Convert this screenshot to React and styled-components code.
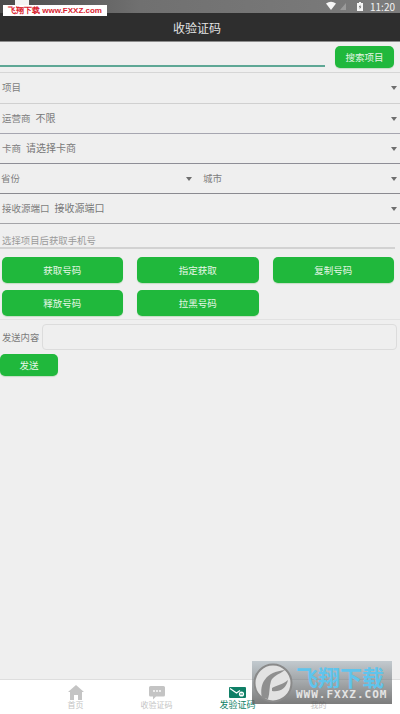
import React from 'react';
import styled, { createGlobalStyle } from 'styled-components';

const GlobalStyle = createGlobalStyle`
	html, body {
		margin: 0;
		padding: 0;
		height: 100%;
		background: #efefef;
		font-family: "Noto Sans CJK SC", "Noto Sans", sans-serif;
	}
	* {
		box-sizing: border-box;
	}
`;

const Page = styled.div`
	position: relative;
	width: 400px;
	height: 714px;
	overflow: hidden;
	display: flex;
	flex-direction: column;
	background: #efefef;
`;

const StatusBar = styled.div`
	height: 13px;
	display: flex;
	align-items: center;
	justify-content: flex-end;
	gap: 6px;
	padding-right: 5px;
	background: linear-gradient(90deg, #4a4a4a 0%, #707070 35%, #7c7c7c 100%);
	color: #f2f2f2;
	font-size: 10px;
	line-height: 13px;
`;

const TitleBar = styled.div`
	height: 29px;
	display: flex;
	align-items: center;
	justify-content: center;
	padding-right: 6px;
	background: #2e2e2e;
	border-bottom: 1px solid #8c8c8c;
	color: #e4e4e4;
	font-size: 12px;
`;

const SearchRow = styled.div`
	height: 31px;
	display: flex;
	align-items: flex-start;
	justify-content: space-between;
	padding: 4px 6px 0 0;
	border-bottom: 1px solid #d6d6d6;
`;

const SearchInput = styled.div`
	width: 325px;
	height: 21px;
	border-bottom: 2px solid #5ea795;
`;

const GreenButton = styled.button`
	border: 0;
	padding: 0;
	height: ${props => props.$height || 26}px;
	width: ${props => props.$width ? props.$width + 'px' : '100%'};
	border-radius: 5px;
	background: #20b83c;
	color: #e6f6e6;
	font-family: inherit;
	font-size: 9.5px;
	box-shadow: 0 1px 1px #c4dcc4;
`;

const SelectRow = styled.div`
	height: ${props => props.$height || 30}px;
	display: flex;
	align-items: center;
	padding-bottom: 2px;
	border-bottom: 1px solid ${props => props.$line || '#a8a8ac'};
`;

const SelectCell = styled.div`
	flex: ${props => props.$width ? `0 0 ${props.$width}px` : 1};
	display: flex;
	align-items: center;
	gap: 5px;
	padding: 0 ${props => props.$right || 3}px 0 ${props => props.$left || 2}px;
	font-size: 9.5px;
	color: #7e7e7e;
`;

const Value = styled.span`
	font-size: 10px;
	color: #777;
`;

const Arrow = styled.span`
	margin-left: auto;
	margin-top: 2px;
	width: 0;
	height: 0;
	border-left: 3.5px solid transparent;
	border-right: 3.5px solid transparent;
	border-top: 4px solid #6e6e6e;
`;

const PhoneLine = styled.div`
	height: 25px;
	width: 395px;
	padding: 10px 0 0 2px;
	border-bottom: 2px solid #d2d2d2;
	font-size: 9.4px;
	line-height: 13px;
	color: #9a9a9a;
`;

const ButtonGrid = styled.div`
	display: grid;
	grid-template-columns: repeat(3, 121.5px);
	column-gap: 14px;
	row-gap: 7px;
	padding: 8px 0 3px 1.5px;
	border-bottom: 1px solid #e2e2e2;
`;

const SendRow = styled.div`
	display: flex;
	align-items: center;
	gap: 3px;
	padding: 4px 3px 4px 2px;
	font-size: 9.3px;
	color: #7a7a7a;
`;

const SendBox = styled.div`
	flex: 1;
	height: 26px;
	border: 1px solid #dcdcdc;
	border-radius: 4px;
	background: #efefef;
`;

const TabBar = styled.div`
	margin-top: auto;
	height: 35px;
	display: grid;
	grid-template-columns: repeat(4, 81px);
	padding-left: 35px;
	background: #fff;
	border-top: 1px solid #dedede;
`;

const Tab = styled.div`
	display: flex;
	flex-direction: column;
	align-items: center;
	padding-top: 5px;
	font-size: ${props => props.$active ? 9 : 8}px;
	line-height: 10px;
	color: ${props => props.$active ? '#0f7f66' : '#c4c4c4'};
`;

const CornerMark = styled.div`
	position: absolute;
	left: 3px;
	top: 5px;
	width: 104px;
	height: 11px;
	display: flex;
	align-items: center;
	justify-content: center;
	gap: 3px;
	background: #fff;
	color: #d8232f;
	font-family: "Liberation Sans", sans-serif;
	font-size: 8px;
	font-weight: 700;
	white-space: nowrap;

	&::before {
		content: "";
		position: absolute;
		left: 12px;
		top: -5px;
		width: 14px;
		height: 5px;
		background: #f4f4f4;
	}
`;

const BigMark = styled.div`
	position: absolute;
	left: 252px;
	top: 661px;
	width: 140px;
	height: 43px;
	display: flex;
	align-items: center;
	gap: 3px;
	padding-left: 1px;
	background: linear-gradient(180deg, rgba(150, 165, 175, 0.5), rgba(80, 80, 80, 0.75));
`;

const MarkText = styled.div`
	display: flex;
	flex-direction: column;
	align-items: flex-start;
`;

const MarkTitle = styled.div`
	font-size: 22px;
	line-height: 25px;
	font-weight: 700;
	color: #5fc4ec;
`;

const MarkUrl = styled.div`
	font-family: "DejaVu Sans Mono", monospace;
	font-size: 11px;
	line-height: 12px;
	font-weight: 700;
	letter-spacing: 1px;
	color: #e4e4e4;
`;

const HomeIcon = () => (
	<svg width="16" height="15" viewBox="0 0 16 15">
		<path d="M8 0 L16 7 L14 7 L14 15 L10 15 L10 10 L6 10 L6 15 L2 15 L2 7 L0 7 Z" fill="#c4c4c4" />
	</svg>
);

const ChatIcon = () => (
	<svg width="16" height="15" viewBox="0 0 16 15">
		<path d="M1.5 1 H14.5 A1.5 1.5 0 0 1 16 2.500 V10 A1.500 1.500 0 0 1 14.500 11.500 H7 L4 14.500 V11.500 H1.500 A1.500 1.500 0 0 1 0 10 V2.500 A1.500 1.500 0 0 1 1.500 1 Z" fill="#c4c4c4" />
		<circle cx="5" cy="6" r="0.9" fill="#fff" />
		<circle cx="8" cy="6" r="0.9" fill="#fff" />
		<circle cx="11" cy="6" r="0.9" fill="#fff" />
	</svg>
);

const MailIcon = () => (
	<svg width="17" height="15" viewBox="0 0 17 15">
		<path d="M1 2 H16 A1 1 0 0 1 17 3 V12 A1 1 0 0 1 16 13 H1 A1 1 0 0 1 0 12 V3 A1 1 0 0 1 1 2 Z" fill="#0f7f66" />
		<path d="M1 3.500 L7.500 8 L11 5.500" stroke="#fff" strokeWidth="1.200" fill="none" />
		<circle cx="12.500" cy="9" r="2.600" fill="#fff" />
		<path d="M11 9 H14" stroke="#0f7f66" strokeWidth="1" />
	</svg>
);

const StatusIcons = () => (
	<svg width="38" height="11" viewBox="0 0 38 11">
		<path d="M0 2.500 Q5 -1 10 2.500 L5 9 Z" fill="#f6f6f6" />
		<path d="M14 9 L20 2 V9 Z" fill="#9a9a9a" />
		<rect x="31" y="2" width="6" height="8" fill="#f6f6f6" />
		<rect x="33" y="1" width="2" height="1" fill="#f6f6f6" />
		<path d="M34.500 3.500 L32.800 6.200 H34 L33.500 8.500 L35.300 5.600 H34.100 Z" fill="#555" />
	</svg>
);

const MarkLogo = () => (
	<svg width="40" height="40" viewBox="0 0 40 40" style={{ flex: 'none' }}>
		<circle cx="20" cy="20" r="18.500" fill="#e2e2e2" stroke="#8a8a8a" strokeWidth="2" />
		<path d="M9 35 C6 20 13 9 32 7 C25 12 20 13 18 18 C16 24 17 30 15 36 Z" fill="#8f8f8f" />
		<path d="M19 25 C24 22 29 22 35 17 C33 26 27 29 19 28 Z" fill="#8f8f8f" />
	</svg>
);

const buttons = ['获取号码', '指定获取', '复制号码', '释放号码', '拉黑号码'];

class App extends React.Component {
	render() {
		return (
			<Page>
				<GlobalStyle />
				<StatusBar>
					<StatusIcons />
					<span>11:20</span>
				</StatusBar>
				<TitleBar>收验证码</TitleBar>
				<SearchRow>
					<SearchInput />
					<GreenButton $width={59} $height={22}>搜索项目</GreenButton>
				</SearchRow>
				<SelectRow $height={31} $line="#d0d0d0">
					<SelectCell>项目<Arrow /></SelectCell>
				</SelectRow>
				<SelectRow $line="#a6a6b0">
					<SelectCell>运营商<Value>不限</Value><Arrow /></SelectCell>
				</SelectRow>
				<SelectRow $line="#8e8e96">
					<SelectCell>卡商<Value>请选择卡商</Value><Arrow /></SelectCell>
				</SelectRow>
				<SelectRow $line="#8a8a90">
					<SelectCell $width={200} $left={1} $right={8}>省份<Arrow /></SelectCell>
					<SelectCell $left={3}>城市<Arrow /></SelectCell>
				</SelectRow>
				<SelectRow $line="#a4a4a8">
					<SelectCell>接收源端口<Value>接收源端口</Value><Arrow /></SelectCell>
				</SelectRow>
				<PhoneLine>选择项目后获取手机号</PhoneLine>
				<ButtonGrid>
					{buttons.map(label => (
						<GreenButton key={label}>{label}</GreenButton>
					))}
				</ButtonGrid>
				<SendRow>
					发送内容
					<SendBox />
				</SendRow>
				<GreenButton $width={58} $height={22}>发送</GreenButton>
				<TabBar>
					<Tab><HomeIcon />首页</Tab>
					<Tab><ChatIcon />收验证码</Tab>
					<Tab $active><MailIcon />发验证码</Tab>
					<Tab><span style={{ height: 15 }} />我的</Tab>
				</TabBar>
				<CornerMark>飞翔下载 www.FXXZ.com</CornerMark>
				<BigMark>
					<MarkLogo />
					<MarkText>
						<MarkTitle>飞翔下载</MarkTitle>
						<MarkUrl>WWW.FXXZ.COM</MarkUrl>
					</MarkText>
				</BigMark>
			</Page>
		);
	}
}

export default App;
